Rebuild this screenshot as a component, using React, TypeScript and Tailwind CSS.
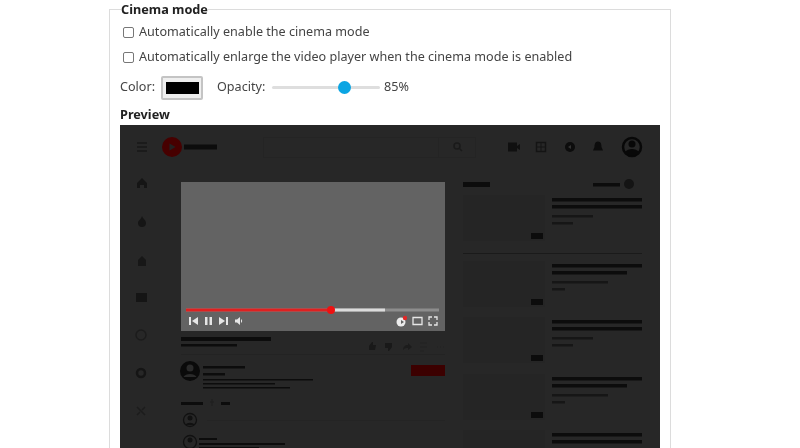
const bar = '#0c0c0c';

// [x, y, width, height] of the text placeholders in the mocked video page
const bars: number[][] = [
  [184, 144.500, 33, 5],
  [181, 337, 90, 4],
  [181, 344, 56, 2.500],
  [203, 366, 42, 2.500],
  [203, 373, 22, 2.500],
  [203, 379, 110, 1.500],
  [203, 383, 72, 1.500],
  [203, 387, 87, 1.500],
  [181, 402, 22, 3],
  [221, 402, 9, 3],
  [199, 438, 18, 2],
  [199, 443, 86, 2],
  [199, 447, 60, 1],
  [463, 182, 27, 5],
  [593, 183, 27, 3.500],
];

const related = [
  { y: 195, long: false },
  { y: 261, long: true },
  { y: 317, long: false },
  { y: 374, long: true },
  { y: 430, long: false },
];

function Related({ y, long }: { y: number; long: boolean }) {
  return (
    <g>
      <rect x="463" y={y} width="82" height="46" fill="#252525" />
      <rect x="531" y={y + 38} width="12" height="6" fill={bar} />
      <rect x="552" y={y + 3} width="90" height="3.500" fill={bar} />
      <rect x="552" y={y + 10} width={long ? 75 : 90} height="3.500" fill={bar} />
      <rect x="552" y={y + 20} width={long ? 56 : 41} height="2.500" fill="#161616" />
      <rect x="552" y={y + 27} width={long ? 13 : 21} height="2.500" fill="#161616" />
    </g>
  );
}

function Preview() {
  return (
    <svg viewBox="120 125 540 323" className="block w-[540px] h-[323px]">
      <rect x="120" y="125" width="540" height="323" fill="#272727" />

      {/* masthead */}
      <path d="M137 143h10M137 147h10M137 151h10" stroke="#181818" strokeWidth="1.500" />
      <circle cx="172" cy="147" r="10" fill="#470000" />
      <path d="M169.500 143.500l6 3.500-6 3.500z" fill="#222" />
      <rect x="263.500" y="137.500" width="212" height="20" fill="none" stroke="#242424" />
      <path d="M438.500 137.500v20" stroke="#242424" />
      <circle cx="457" cy="146" r="3" fill="none" stroke="#1a1a1a" strokeWidth="1.500" />
      <path d="M459 148l3 3" stroke="#1a1a1a" strokeWidth="1.500" />
      <path d="M508 142.500h9v9h-9zM517 146l3-2v6l-3-2z" fill="#101010" />
      <path d="M536.500 142.500h9v9h-9z" fill="none" stroke="#141414" strokeWidth="1.500" />
      <path d="M536.500 147h9M541 142.500v9" stroke="#141414" />
      <circle cx="570" cy="147" r="5" fill="#0c0c0c" />
      <path d="M568 147l3-2v4z" fill="#333" />
      <path d="M598 141.500c-3 0-3.500 3-3.500 5.500l-1.500 3.500h10l-1.500-3.500c0-2.500-.500-5.500-3.500-5.500z" fill="#0c0c0c" />
      <circle cx="632" cy="147" r="9" fill="none" stroke="#080808" strokeWidth="2.500" />
      <circle cx="632" cy="144" r="3.500" fill="#080808" />
      <path d="M625 152c3-4 11-4 14 0v2l-7 2-7-2z" fill="#080808" />

      {/* sidebar */}
      <path d="M137 183l5-5 5 5v5h-3v-3h-4v3h-3z" fill="#151515" />
      <path d="M142 216c1 3 4 4 4 7a4 4 0 0 1-8 0c0-3 3-3 4-7z" fill="#151515" />
      <path d="M138 260l4-4 4 4v6h-8z" fill="#171717" />
      <path d="M136 293h11v9h-11z" fill="#151515" />
      <circle cx="141" cy="335" r="5" fill="none" stroke="#1c1c1c" strokeWidth="1.500" />
      <circle cx="141" cy="373" r="4" fill="none" stroke="#151515" strokeWidth="2.500" />
      <path d="M137 407l8 8M137 415l3-3M142 410l3-3" stroke="#1c1c1c" strokeWidth="1.500" />

      {/* player */}
      <rect x="181" y="182" width="264" height="149" fill="#636363" />
      <rect x="186" y="308.500" width="253" height="3" fill="#8d8d8d" />
      <rect x="331" y="308.500" width="54" height="3" fill="#dcdcdc" />
      <rect x="186" y="308.500" width="145" height="3" fill="#e02020" />
      <circle cx="331" cy="310" r="4" fill="#ee1111" />
      <g fill="#e6e6e6">
        <path d="M189 317h2v8h-2zM198 317v8l-6-4z" />
        <path d="M205 317h2.500v8H205zM209.500 317h2.500v8h-2.500z" />
        <path d="M219 317l6 4-6 4zM226 317h2v8h-2z" />
        <path d="M235 319.500h2l3-2.500v8l-3-2.500h-2z" />
        <path d="M241 319c1.500 1 1.500 3 0 4z" />
        <path d="M413 317.500h9v7h-9z" fill="none" stroke="#e6e6e6" strokeWidth="1.300" />
        <path d="M429 320v-3h3M434 317h3v3M437 322v3h-3M432 325h-3v-3" fill="none" stroke="#e6e6e6" strokeWidth="1.300" />
      </g>
      <circle cx="401" cy="322" r="4.500" fill="#ececec" />
      <path d="M401 320l3 2-3 2z" fill="#636363" />
      <circle cx="405" cy="318" r="2.200" fill="#e02828" />

      {/* video info */}
      {bars.map(([x, y, w, h]) => (
        <rect key={`${x}-${y}`} x={x} y={y} width={w} height={h} fill={bar} />
      ))}
      <path d="M369 350v-4l3-4h1v3h3l-1 5z" fill="#191919" />
      <path d="M385 343h7v4l-3 4h-1v-3h-3z" fill="#191919" />
      <path d="M403 350c0-3 2-5 5-5v-2l4 4-4 3v-2c-2 0-3 0-5 2z" fill="#1c1c1c" />
      <path d="M420 343h7M420 347h7M420 351h4" stroke="#222" />
      <path d="M437 347h8" stroke="#222" strokeDasharray="1 2" />
      <path d="M181 354.500h264" stroke="#232323" />
      <circle cx="190" cy="371" r="10" fill="#0a0a0a" />
      <circle cx="190" cy="368" r="3.500" fill="#2a2a2a" />
      <path d="M183.500 377c2-4 11-4 13 0z" fill="#2a2a2a" />
      <rect x="411" y="365" width="34" height="11" fill="#3c0000" />
      <path d="M212 399v7M210 402h4" stroke="#1f1f1f" />
      <circle cx="190" cy="420" r="6.500" fill="none" stroke="#111" strokeWidth="1.300" />
      <circle cx="190" cy="418" r="2.500" fill="#111" />
      <path d="M185.500 425c1-3 8-3 9 0z" fill="#111" />
      <path d="M207 420.500h238" stroke="#242424" />
      <circle cx="190" cy="442" r="6.500" fill="none" stroke="#111" strokeWidth="1.300" />
      <circle cx="190" cy="440" r="2.500" fill="#111" />

      {/* up next */}
      <circle cx="629" cy="184" r="5" fill="#141414" />
      <path d="M463 253.500h179" stroke="#1a1a1a" />
      {related.map((item) => (
        <Related key={item.y} {...item} />
      ))}
    </svg>
  );
}

export default function App() {
  return (
    <div className="h-[448px] overflow-hidden bg-white pl-[109px] text-[#444] blur-[0.55px] font-['Noto_Sans',sans-serif] text-[12.6px]">
      <fieldset className="mt-[3px] w-[562px] border border-[#dcdcdc] pl-[10px] pr-[10px]">
        <legend className="ml-[1px] font-bold leading-[13px] text-[12.700px] text-[#222]">Cinema mode</legend>

        <label className="mt-[4px] ml-[3px] flex h-[25px] items-center gap-[5px]">
          <span className="h-[11px] w-[11px] rounded-[2px] border border-[#777]" />
          Automatically enable the cinema mode
        </label>
        <label className="ml-[3px] flex h-[25px] items-center gap-[5px]">
          <span className="h-[11px] w-[11px] rounded-[2px] border border-[#777]" />
          Automatically enlarge the video player when the cinema mode is enabled
        </label>

        <div className="mt-[5px] flex h-[25px] items-center">
          <span className="w-[41px]">Color:</span>
          <div className="flex h-[24px] w-[42px] items-center justify-center rounded-[2px] border-2 border-[#c4c4c4] bg-[#efefef]">
            <div className="h-[12px] w-[33px] bg-black" />
          </div>
          <span className="ml-[14px] w-[55px]">Opacity:</span>
          <div className="relative h-[3px] w-[108px] rounded-full bg-[#dedede]">
            <div className="absolute left-[66px] top-[-5px] h-[13px] w-[13px] rounded-full bg-[#0ba5e3]" />
          </div>
          <span className="ml-[4px]">85%</span>
        </div>

        <div className="mt-[5px] mb-[2px] font-bold leading-[18px] text-[12.700px] text-[#222]">Preview</div>
        <Preview />
      </fieldset>
    </div>
  );
}
